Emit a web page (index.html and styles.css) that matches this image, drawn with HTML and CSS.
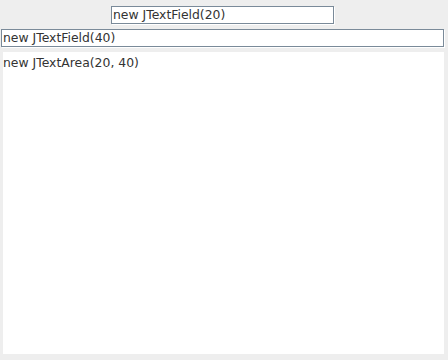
FILE: index.html
```html
<!DOCTYPE html>
<html lang="en">
<head>
    <meta charset="UTF-8">
    <title>JTextField / JTextArea</title>
    <link rel="stylesheet" href="styles.css">
</head>
<body>
    <div class="frame">
        <div class="top-row">
            <div class="field short">new JTextField(20)</div>
        </div>
        <div class="field wide">new JTextField(40)</div>
        <div class="area">new JTextArea(20, 40)</div>
    </div>
</body>
</html>
```

FILE: styles.css
```css
html, body {
    margin: 0;
    padding: 0;
}
body {
    background: #eeeeee;
    font-family: "DejaVu Sans", sans-serif;
    font-size: 12.4px;
    color: #333333;
}
.frame {
    width: 448px;
    height: 360px;
    display: flex;
    flex-direction: column;
}
.top-row {
    display: flex;
    justify-content: center;
    padding: 6px 0 5px;
}
.field {
    background: #fff;
    border: 1px solid #7a8a99;
    box-shadow: 1px 1px 0 #fff;
    height: 16px;
    line-height: 16px;
    padding: 0 1px;
    white-space: nowrap;
}
.short {
    width: 219px;
    margin-right: 3px;
}
.wide {
    margin: 0 4px 0 1px;
}
.area {
    flex: 1;
    background: #fff;
    margin: 5px 4px 6px 3px;
    padding: 3px 0;
    line-height: 15px;
}
```
